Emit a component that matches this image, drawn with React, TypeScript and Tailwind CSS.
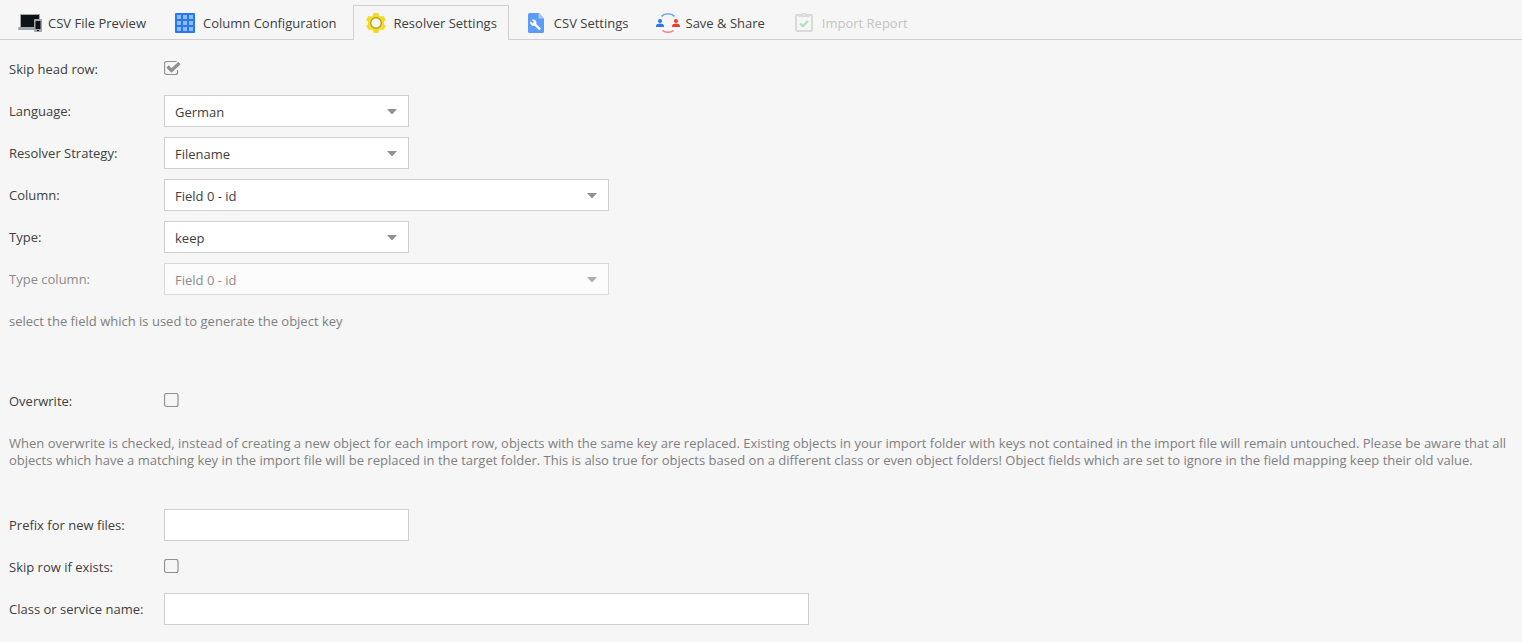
import { useState } from "react";
import type { ReactNode } from "react";
import clsx from "clsx";

function DevicesIcon() {
  return (
    <svg viewBox="0 0 24 20" className="h-5 w-6">
      <rect x="2.5" y="1.5" width="19" height="14" fill="#0e1216" stroke="#a2a5a9" />
      <rect x="0" y="14" width="17" height="3" rx="1" fill="#a2a5a9" />
      <rect x="3" y="13" width="13" height="1" fill="#0e1216" />
      <rect x="16" y="6" width="8" height="13" rx="1" fill="#a2a5a9" />
      <rect x="17.5" y="8" width="5" height="8" fill="#0e1216" />
      <rect x="19" y="17" width="2" height="1" fill="#0e1216" />
    </svg>
  );
}

function GridIcon() {
  return (
    <svg viewBox="0 0 20 20" className="h-5 w-5">
      <rect width="20" height="20" rx="1" fill="#2878f0" />
      {[2, 8, 14].map((y) =>
        [2, 8, 14].map((x) => (
          <rect key={`${x}-${y}`} x={x} y={y} width="4" height="4" fill="#8ebcff" />
        ))
      )}
    </svg>
  );
}

function GearIcon() {
  return (
    <svg viewBox="0 0 20 20" className="h-5 w-5">
      {[0, 60, 120].map((angle) => (
        <path
          key={angle}
          d="M7.500 0h5l.5 4v12l-.5 4h-5L7 16V4z"
          fill="#f2dc24"
          transform={`rotate(${angle} 10 10)`}
        />
      ))}
      <circle cx="10" cy="10" r="8" fill="#f2dc24" />
      <circle cx="10" cy="10" r="5.3" fill="#f5f5f5" stroke="#b8a416" strokeWidth="1.400" />
    </svg>
  );
}

function FileWrenchIcon() {
  return (
    <svg viewBox="0 0 20 20" className="h-5 w-5">
      <path d="M3.500 0H13l5 5.500v13a1.500 1.500 0 0 1-1.500 1.500h-13A1.500 1.500 0 0 1 2 18.500v-17A1.500 1.500 0 0 1 3.500 0z" fill="#5c9cf6" />
      <path d="M12.500 0L18 5.500h-5.500z" fill="#a5c8fb" />
      <path
        d="M14.600 15.200l-4.300-4.300c.4-1.200.1-2.500-.8-3.400-1-1-2.400-1.200-3.600-.6l2 2-1.400 1.400-2-2c-.6 1.200-.3 2.700.7 3.600.9.900 2.200 1.200 3.400.8l4.300 4.300c.2.200.5.200.7 0l1-1.100c.2-.2.200-.5 0-.7z"
        fill="#fff"
      />
    </svg>
  );
}

function ShareIcon() {
  return (
    <svg viewBox="0 0 24 20" className="h-5 w-6" fill="none">
      <path d="M5.500 3.500C8.500 0 15.500 0 18.500 3.500" stroke="#5c9cf6" strokeWidth="1.400" />
      <path d="M6.500 17.500c3 2.300 8 2.300 11 0" stroke="#f47a6e" strokeWidth="1.400" />
      <circle cx="4" cy="8" r="2" fill="#2878f0" />
      <path d="M0 14v-1.300c0-1.500 2.500-2.200 4-2.200s4 .7 4 2.200V14z" fill="#2878f0" />
      <circle cx="20" cy="8" r="2" fill="#f23c2b" />
      <path d="M16 14v-1.300c0-1.500 2.500-2.200 4-2.200s4 .7 4 2.200V14z" fill="#f23c2b" />
    </svg>
  );
}

function ClipboardIcon() {
  return (
    <svg viewBox="0 0 20 20" className="h-5 w-5" fill="none">
      <rect x="2" y="2" width="16" height="16" rx="1" stroke="#dadada" strokeWidth="2" />
      <path d="M5 1h2.500a2.600 2.600 0 0 1 5 0H15v3H5z" fill="#dadada" />
      <circle cx="10" cy="1.700" r=".8" fill="#f5f5f5" />
      <path d="M6 10.500l2.800 2.800L14 8" stroke="#aedfc0" strokeWidth="2.200" />
    </svg>
  );
}

const tabs = [
  { label: "CSV File Preview", icon: <DevicesIcon /> },
  { label: "Column Configuration", icon: <GridIcon /> },
  { label: "Resolver Settings", icon: <GearIcon /> },
  { label: "CSV Settings", icon: <FileWrenchIcon /> },
  { label: "Save & Share", icon: <ShareIcon /> },
  { label: "Import Report", icon: <ClipboardIcon />, disabled: true },
];

function Row({
  id,
  label,
  disabled,
  children,
}: {
  id: string;
  label: string;
  disabled?: boolean;
  children: ReactNode;
}) {
  return (
    <div className="flex min-h-8 items-center">
      <label
        htmlFor={id}
        className={clsx("w-[155px] shrink-0", disabled && "text-[#8c8c8c]")}
      >
        {label}
      </label>
      {children}
    </div>
  );
}

function Select({
  id,
  options,
  wide,
  disabled,
}: {
  id: string;
  options: string[];
  wide?: boolean;
  disabled?: boolean;
}) {
  return (
    <div className={clsx("relative", wide ? "w-[445px]" : "w-[245px]", disabled && "opacity-70")}>
      <select
        id={id}
        disabled={disabled}
        className={clsx(
          "block h-8 w-full appearance-none border border-[#cfcfcf] bg-white px-[10px] pt-[2px] outline-none",
          disabled && "text-[#606060]"
        )}
      >
        {options.map((o) => (
          <option key={o}>{o}</option>
        ))}
      </select>
      <svg
        viewBox="0 0 10 5"
        className="pointer-events-none absolute top-[14px] right-3 h-[5px] w-[10px]"
      >
        <path d="M0 0h10L5.500 5h-1z" fill="#919191" />
      </svg>
    </div>
  );
}

function Checkbox({ id, defaultChecked = false }: { id: string; defaultChecked?: boolean }) {
  const [checked, setChecked] = useState(defaultChecked);

  return (
    <div className="relative h-4 w-[18px]">
      <input
        id={id}
        type="checkbox"
        checked={checked}
        onChange={(e) => setChecked(e.target.checked)}
        className="block h-4 w-[18px] appearance-none"
      />
      <svg
        viewBox="0 0 18 16"
        fill="none"
        className="pointer-events-none absolute inset-0 h-4 w-[18px]"
      >
        {checked ? (
          <>
            <path
              d="M13.500 9v2.500a2 2 0 0 1-2 2h-9a2 2 0 0 1-2-2v-9a2 2 0 0 1 2-2h10"
              stroke="#919191"
              strokeWidth="1.200"
            />
            <path d="M3.500 5.500L7.500 9.500L15.500 2" stroke="#919191" strokeWidth="3.200" />
          </>
        ) : (
          <rect x=".5" y=".5" width="13.500" height="13" rx="2" stroke="#919191" strokeWidth="1.200" />
        )}
      </svg>
    </div>
  );
}

export default function App() {
  const [active, setActive] = useState("Resolver Settings");

  return (
    <div className="min-h-screen bg-[#f6f6f6] font-['Open_Sans',sans-serif] text-[13px] leading-[17px] text-[#404040]">
      {/* Tab bar */}
      <div role="tablist" className="flex h-10 items-end gap-1 border-b border-[#cfcfcf] pl-[7px]">
        {tabs.map((tab) => (
          <button
            key={tab.label}
            role="tab"
            aria-selected={active === tab.label}
            disabled={tab.disabled}
            onClick={() => setActive(tab.label)}
            className={clsx(
              "-mb-px flex h-[35px] items-center gap-2 border border-b-0 pr-[11px] pl-3 whitespace-nowrap",
              active === tab.label ? "border-[#cfcfcf] bg-[#f6f6f6]" : "border-transparent",
              tab.disabled && "text-[#c4c4c4]"
            )}
          >
            <span className="flex w-5 shrink-0 justify-center *:shrink-0">{tab.icon}</span>
            {tab.label}
          </button>
        ))}
      </div>

      {/* Settings form */}
      <form className="flex flex-col gap-[10px] px-[9px] pt-[13px] pb-4">
        <Row id="skipHeadRow" label="Skip head row:">
          <Checkbox id="skipHeadRow" defaultChecked />
        </Row>
        <Row id="language" label="Language:">
          <Select id="language" options={["German", "English"]} />
        </Row>
        <Row id="strategy" label="Resolver Strategy:">
          <Select id="strategy" options={["Filename"]} />
        </Row>
        <Row id="column" label="Column:">
          <Select id="column" options={["Field 0 - id"]} wide />
        </Row>
        <Row id="type" label="Type:">
          <Select id="type" options={["keep"]} />
        </Row>
        <Row id="typeColumn" label="Type column:" disabled>
          <Select id="typeColumn" options={["Field 0 - id"]} wide disabled />
        </Row>
        <p className="flex min-h-8 items-center text-[#808080]">
          select the field which is used to generate the object key
        </p>

        <div className="pt-[38px]">
          <Row id="overwrite" label="Overwrite:">
            <Checkbox id="overwrite" />
          </Row>
        </div>
        <p className="pt-2 pb-[30px] text-[#808080]">
          When overwrite is checked, instead of creating a new object for each import row, objects
          with the same key are replaced. Existing objects in your import folder with keys not
          contained in the import file will remain untouched. Please be aware that all objects which
          have a matching key in the import file will be replaced in the target folder. This is also
          true for objects based on a different class or even object folders! Object fields which
          are set to ignore in the field mapping keep their old value.
        </p>

        <Row id="prefix" label="Prefix for new files:">
          <input
            id="prefix"
            type="text"
            className="h-8 w-[245px] border border-[#cfcfcf] bg-white px-[10px] outline-none"
          />
        </Row>
        <Row id="skipExisting" label="Skip row if exists:">
          <Checkbox id="skipExisting" />
        </Row>
        <Row id="serviceName" label="Class or service name:">
          <input
            id="serviceName"
            type="text"
            className="h-8 w-[645px] border border-[#cfcfcf] bg-white px-[10px] outline-none"
          />
        </Row>
      </form>
    </div>
  );
}
